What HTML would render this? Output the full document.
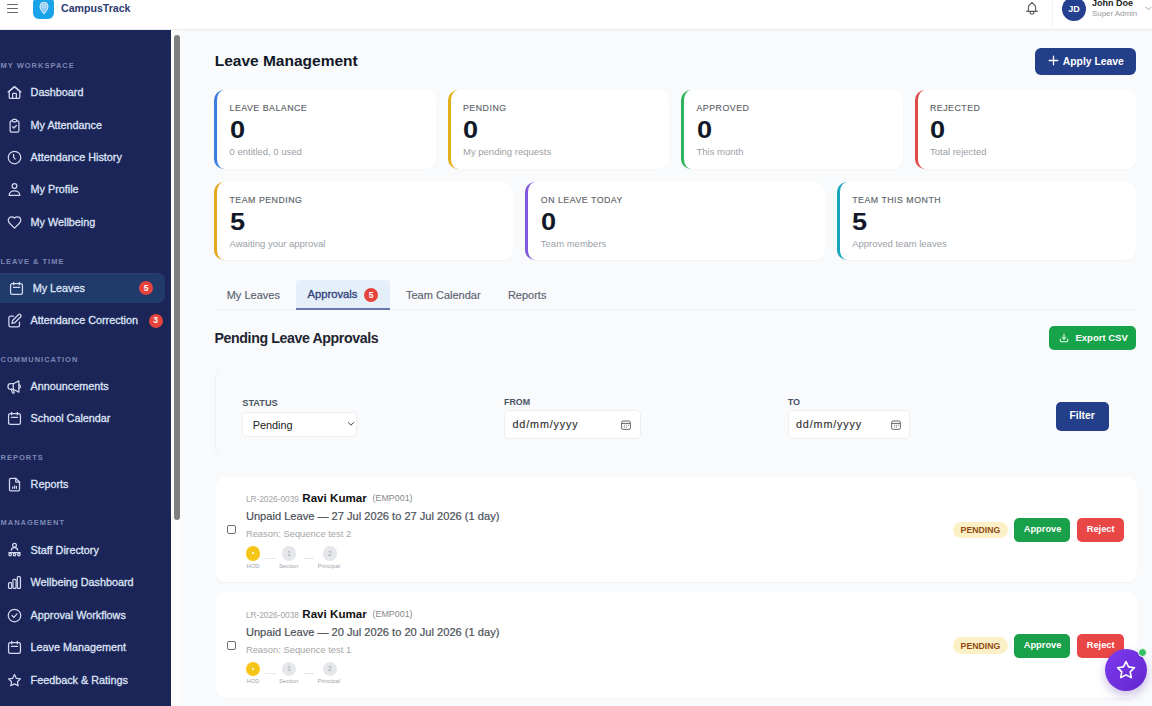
<!DOCTYPE html>
<html><head><meta charset="utf-8"><style>
html,body{margin:0;padding:0;}
body{width:1152px;height:706px;overflow:hidden;position:relative;background:#f8fafc;font-family:"Liberation Sans", sans-serif;}
.t{position:absolute;white-space:nowrap;}
.b{position:absolute;}
svg.b{overflow:visible;}
</style></head><body>
<div class="b" style="left:0px;top:0px;width:1152px;height:30px;background:#fff;border-bottom:1px solid #ececec;box-sizing:border-box;box-shadow:0 1px 2px rgba(0,0,0,0.03)"></div>
<div class="b" style="left:7px;top:4.2px;width:11px;height:1.2px;background:#666;border-radius:1px"></div>
<div class="b" style="left:7px;top:8.1px;width:11px;height:1.2px;background:#666;border-radius:1px"></div>
<div class="b" style="left:7px;top:11.9px;width:11px;height:1.2px;background:#666;border-radius:1px"></div>
<div class="b" style="left:33px;top:-3px;width:21px;height:21.5px;background:#1aa3e8;border-radius:6px"></div>
<svg class="b" style="left:39px;top:1.2px" width="10" height="14" viewBox="0 0 10 14"><path d="M5 13 C2.6 10.2 1 7.8 1 5.2 A4 4 0 0 1 9 5.2 C9 7.8 7.4 10.2 5 13Z" fill="#8fc9f0" stroke="#e6f5ff" stroke-width="0.9"/><rect x="3.6" y="3.4" width="2.8" height="3.6" fill="#a8d4f3" stroke="#c8e6fa" stroke-width="0.5"/></svg>
<div class="t" style="left:61.00px;top:3.13px;font-size:10.6px;line-height:10.6px;font-weight:700;color:#2b3a72;">CampusTrack</div>
<svg class="b" style="left:1025.6px;top:1px" width="12" height="14" viewBox="0 0 12 14" fill="none" stroke="#5a5a5a" stroke-width="1.1" stroke-linejoin="round" stroke-linecap="round"><path d="M2.4 10.3 V6.3 C2.4 4.9 3 4.4 3.8 3.8 L6 1.4 L8.2 3.8 C9 4.4 9.6 4.9 9.6 6.3 V10.3"/><path d="M0.7 10.4 H11.3"/><path d="M3.9 10.8 C4.3 14.1 7.7 14.1 8.1 10.8"/></svg>
<div class="b" style="left:1052px;top:0px;width:1px;height:30px;background:#f1f2f4"></div>
<div class="b" style="left:1062px;top:-3.5px;width:24px;height:24px;background:#24408e;border-radius:50%"></div>
<div class="t" style="left:1065.50px;top:4.68px;font-size:9px;line-height:9px;font-weight:700;color:#fff;width:17px;text-align:center">JD</div>
<div class="t" style="left:1092.00px;top:-0.62px;font-size:9px;line-height:9px;font-weight:700;color:#222;">John Doe</div>
<div class="t" style="left:1092.00px;top:9.61px;font-size:7.9px;line-height:7.9px;font-weight:400;color:#9a9a9a;">Super Admin</div>
<svg class="b" style="left:1145px;top:6px" width="7" height="5" viewBox="0 0 7 5" fill="none" stroke="#999" stroke-width="0.9"><path d="M0.5 0.8 L3.5 3.8 L6.5 0.8"/></svg>
<div class="b" style="left:0px;top:30px;width:171px;height:676px;background:#1b2558"></div>
<div class="b" style="left:171px;top:30px;width:11px;height:676px;background:#fcfcfc"></div>
<div class="b" style="left:174px;top:35px;width:6px;height:485px;background:#7f7f7f;border-radius:3px"></div>
<div class="t" style="left:0.50px;top:61.65px;font-size:7.5px;line-height:7.5px;font-weight:700;color:#7d87b3;letter-spacing:1px;">MY WORKSPACE</div>
<div class="t" style="left:0.50px;top:257.55px;font-size:7.5px;line-height:7.5px;font-weight:700;color:#7d87b3;letter-spacing:1px;">LEAVE &amp; TIME</div>
<div class="t" style="left:0.50px;top:355.85px;font-size:7.5px;line-height:7.5px;font-weight:700;color:#7d87b3;letter-spacing:1px;">COMMUNICATION</div>
<div class="t" style="left:0.50px;top:453.65px;font-size:7.5px;line-height:7.5px;font-weight:700;color:#7d87b3;letter-spacing:1px;">REPORTS</div>
<div class="t" style="left:0.50px;top:519.45px;font-size:7.5px;line-height:7.5px;font-weight:700;color:#7d87b3;letter-spacing:1px;">MANAGEMENT</div>
<div class="b" style="left:-8px;top:273px;width:173px;height:30px;background:#213a6c;border-radius:7px;box-shadow:inset 0 1px 0 rgba(255,255,255,0.04)"></div>
<svg class="b" style="left:6.5px;top:84.9px" width="15" height="15" viewBox="0 0 24 24" fill="none" stroke="#d3d9f0" stroke-width="2" stroke-linecap="round" stroke-linejoin="round"><path d="M15 21v-6.5a1 1 0 0 0-1-1h-4a1 1 0 0 0-1 1V21"/><path d="M3.5 11a2 2 0 0 1 .7-1.5l6.5-5.6a2 2 0 0 1 2.6 0l6.5 5.6a2 2 0 0 1 .7 1.5v8.5a2 2 0 0 1-2 2H5.5a2 2 0 0 1-2-2z"/><path d="M1.8 11.2 12 2.5l10.2 8.7"/></svg>
<div class="t" style="left:30.60px;top:87.26px;font-size:10.8px;line-height:10.8px;font-weight:400;color:#dfe4f6;-webkit-text-stroke:0.3px #dfe4f6">Dashboard</div>
<svg class="b" style="left:6.5px;top:117.5px" width="15" height="15" viewBox="0 0 24 24" fill="none" stroke="#d3d9f0" stroke-width="2" stroke-linecap="round" stroke-linejoin="round"><path d="M15.5 4.5h1.5a2 2 0 0 1 2 2v14a2 2 0 0 1-2 2H7a2 2 0 0 1-2-2v-14a2 2 0 0 1 2-2h1.5"/><rect x="8.5" y="2" width="7" height="4" rx="2"/><path d="m9 14 2 2 4-4"/></svg>
<div class="t" style="left:30.60px;top:119.86px;font-size:10.8px;line-height:10.8px;font-weight:400;color:#dfe4f6;-webkit-text-stroke:0.3px #dfe4f6">My Attendance</div>
<svg class="b" style="left:6.5px;top:150.0px" width="15" height="15" viewBox="0 0 24 24" fill="none" stroke="#d3d9f0" stroke-width="2" stroke-linecap="round" stroke-linejoin="round"><circle cx="12" cy="12" r="10"/><path d="M10.5 7v4.5l2.5 3"/></svg>
<div class="t" style="left:30.60px;top:152.36px;font-size:10.8px;line-height:10.8px;font-weight:400;color:#dfe4f6;-webkit-text-stroke:0.3px #dfe4f6">Attendance History</div>
<svg class="b" style="left:6.5px;top:182.0px" width="15" height="15" viewBox="0 0 24 24" fill="none" stroke="#d3d9f0" stroke-width="2" stroke-linecap="round" stroke-linejoin="round"><circle cx="12" cy="6.5" r="3.8"/><path d="M3.5 21.5c0-4.5 3.8-7.5 8.5-7.5s8.5 3 8.5 7.5z"/></svg>
<div class="t" style="left:30.60px;top:184.36px;font-size:10.8px;line-height:10.8px;font-weight:400;color:#dfe4f6;-webkit-text-stroke:0.3px #dfe4f6">My Profile</div>
<svg class="b" style="left:6.5px;top:215.1px" width="15" height="15" viewBox="0 0 24 24" fill="none" stroke="#d3d9f0" stroke-width="2" stroke-linecap="round" stroke-linejoin="round"><path d="M19.5 13.5c1.5-1.5 2.5-3 2.5-5A5.5 5.5 0 0 0 16.5 3c-1.8 0-3 .5-4.5 2-1.5-1.5-2.7-2-4.5-2A5.5 5.5 0 0 0 2 8.5c0 2 1 3.5 2.5 5l7.5 7.5Z"/></svg>
<div class="t" style="left:30.60px;top:217.46px;font-size:10.8px;line-height:10.8px;font-weight:400;color:#dfe4f6;-webkit-text-stroke:0.3px #dfe4f6">My Wellbeing</div>
<svg class="b" style="left:8.5px;top:280.9px" width="15" height="15" viewBox="0 0 24 24" fill="none" stroke="#d3d9f0" stroke-width="2" stroke-linecap="round" stroke-linejoin="round"><rect x="2.5" y="4" width="19" height="17.5" rx="3"/><path d="M7.5 2v4M16.5 2v4M7 10h10"/></svg>
<div class="t" style="left:32.70px;top:283.26px;font-size:10.8px;line-height:10.8px;font-weight:400;color:#dfe4f6;-webkit-text-stroke:0.3px #dfe4f6">My Leaves</div>
<svg class="b" style="left:6.5px;top:312.8px" width="15" height="15" viewBox="0 0 24 24" fill="none" stroke="#d3d9f0" stroke-width="2" stroke-linecap="round" stroke-linejoin="round"><path d="M10.5 5H6a3 3 0 0 0-3 3v11a3 3 0 0 0 3 3h11a3 3 0 0 0 3-3v-4.5"/><path d="M18.5 2.5a2.5 2.5 0 0 1 3.5 3.5l-9.5 9.5-4.5 1 1-4.5z"/></svg>
<div class="t" style="left:30.60px;top:315.16px;font-size:10.8px;line-height:10.8px;font-weight:400;color:#dfe4f6;-webkit-text-stroke:0.3px #dfe4f6">Attendance Correction</div>
<svg class="b" style="left:6.5px;top:378.9px" width="15" height="15" viewBox="0 0 24 24" fill="none" stroke="#d3d9f0" stroke-width="2" stroke-linecap="round" stroke-linejoin="round"><path d="M10 7.5 19 3v18l-9-4.5"/><path d="M10 7.5H6a4 4 0 0 0 0 9h4z"/><path d="M19 9.5a2.5 2.5 0 0 1 0 5"/><path d="M7 16.5l1.5 5a1.5 1.5 0 0 0 3-.5L10 16.5"/></svg>
<div class="t" style="left:30.60px;top:381.26px;font-size:10.8px;line-height:10.8px;font-weight:400;color:#dfe4f6;-webkit-text-stroke:0.3px #dfe4f6">Announcements</div>
<svg class="b" style="left:6.5px;top:410.8px" width="15" height="15" viewBox="0 0 24 24" fill="none" stroke="#d3d9f0" stroke-width="2" stroke-linecap="round" stroke-linejoin="round"><rect x="2.5" y="4" width="19" height="17.5" rx="3"/><path d="M7.5 2v4M16.5 2v4M7 10h10"/></svg>
<div class="t" style="left:30.60px;top:413.16px;font-size:10.8px;line-height:10.8px;font-weight:400;color:#dfe4f6;-webkit-text-stroke:0.3px #dfe4f6">School Calendar</div>
<svg class="b" style="left:6.5px;top:476.5px" width="15" height="15" viewBox="0 0 24 24" fill="none" stroke="#d3d9f0" stroke-width="2" stroke-linecap="round" stroke-linejoin="round"><path d="M14 2H6a2 2 0 0 0-2 2v16a2 2 0 0 0 2 2h12a2 2 0 0 0 2-2V8z"/><path d="M14 2v6h6"/><path d="M9 18v-2M12 18v-4M15 18v-3"/></svg>
<div class="t" style="left:30.60px;top:478.86px;font-size:10.8px;line-height:10.8px;font-weight:400;color:#dfe4f6;-webkit-text-stroke:0.3px #dfe4f6">Reports</div>
<svg class="b" style="left:6.5px;top:542.3px" width="15" height="15" viewBox="0 0 24 24" fill="none" stroke="#d3d9f0" stroke-width="2" stroke-linecap="round" stroke-linejoin="round"><circle cx="12" cy="5" r="3"/><path d="M7 13c0-2.5 2.2-4 5-4s5 1.5 5 4"/><path d="M3 17h18"/><circle cx="5" cy="20" r="2"/><circle cx="12" cy="20" r="2"/><circle cx="19" cy="20" r="2"/></svg>
<div class="t" style="left:30.60px;top:544.66px;font-size:10.8px;line-height:10.8px;font-weight:400;color:#dfe4f6;-webkit-text-stroke:0.3px #dfe4f6">Staff Directory</div>
<svg class="b" style="left:6.5px;top:575.0px" width="15" height="15" viewBox="0 0 24 24" fill="none" stroke="#d3d9f0" stroke-width="2" stroke-linecap="round" stroke-linejoin="round"><rect x="2.5" y="12" width="5" height="9.5" rx="1.5"/><rect x="9.5" y="7" width="5" height="14.5" rx="1.5"/><rect x="16.5" y="2.5" width="5" height="19" rx="1.5"/></svg>
<div class="t" style="left:30.60px;top:577.36px;font-size:10.8px;line-height:10.8px;font-weight:400;color:#dfe4f6;-webkit-text-stroke:0.3px #dfe4f6">Wellbeing Dashboard</div>
<svg class="b" style="left:6.5px;top:607.5px" width="15" height="15" viewBox="0 0 24 24" fill="none" stroke="#d3d9f0" stroke-width="2" stroke-linecap="round" stroke-linejoin="round"><circle cx="12" cy="12" r="10"/><path d="m8 12 3 3 5-5.5"/></svg>
<div class="t" style="left:30.60px;top:609.86px;font-size:10.8px;line-height:10.8px;font-weight:400;color:#dfe4f6;-webkit-text-stroke:0.3px #dfe4f6">Approval Workflows</div>
<svg class="b" style="left:6.5px;top:640.0px" width="15" height="15" viewBox="0 0 24 24" fill="none" stroke="#d3d9f0" stroke-width="2" stroke-linecap="round" stroke-linejoin="round"><rect x="2.5" y="4" width="19" height="17.5" rx="3"/><path d="M7.5 2v4M16.5 2v4M7 10h10"/></svg>
<div class="t" style="left:30.60px;top:642.36px;font-size:10.8px;line-height:10.8px;font-weight:400;color:#dfe4f6;-webkit-text-stroke:0.3px #dfe4f6">Leave Management</div>
<svg class="b" style="left:6.5px;top:672.5px" width="15" height="15" viewBox="0 0 24 24" fill="none" stroke="#d3d9f0" stroke-width="2" stroke-linecap="round" stroke-linejoin="round"><path d="M12 2.5l2.9 6 6.6.9-4.8 4.6 1.2 6.5L12 17.4l-5.9 3.1 1.2-6.5L2.5 9.4l6.6-.9z"/></svg>
<div class="t" style="left:30.60px;top:674.86px;font-size:10.8px;line-height:10.8px;font-weight:400;color:#dfe4f6;-webkit-text-stroke:0.3px #dfe4f6">Feedback &amp; Ratings</div>
<div class="b" style="left:139.0px;top:281.0px;width:14px;height:14px;background:#e5443c;border-radius:50%"></div>
<div class="t" style="left:139.00px;top:283.80px;font-size:8.5px;line-height:8.5px;font-weight:700;color:#fff;width:14px;text-align:center">5</div>
<div class="b" style="left:148.6px;top:313.5px;width:14px;height:14px;background:#e5443c;border-radius:50%"></div>
<div class="t" style="left:148.60px;top:316.30px;font-size:8.5px;line-height:8.5px;font-weight:700;color:#fff;width:14px;text-align:center">3</div>
<div class="t" style="left:214.70px;top:53.28px;font-size:15.5px;line-height:15.5px;font-weight:700;color:#111827;">Leave Management</div>
<div class="b" style="left:1035px;top:48px;width:101px;height:27px;background:#233f8a;border-radius:6px"></div>
<svg class="b" style="left:1048px;top:55px" width="11" height="11" viewBox="0 0 11 11" fill="none" stroke="#fff" stroke-width="1.3" stroke-linecap="round"><path d="M5.5 1.2v8.6M1.2 5.5h8.6"/></svg>
<div class="t" style="left:1062.80px;top:56.54px;font-size:10.35px;line-height:10.35px;font-weight:700;color:#fff;">Apply Leave</div>
<div class="b" style="left:214px;top:90px;width:221.5px;height:79px;background:#fff;border-radius:10px;border-left:3px solid #3b7fdb;box-sizing:border-box;box-shadow:0 1px 2px rgba(15,23,42,0.03)"></div>
<div class="t" style="left:229.50px;top:103.75px;font-size:8.8px;line-height:8.8px;font-weight:400;color:#606469;letter-spacing:0.5px;-webkit-text-stroke:0.15px #606469">LEAVE BALANCE</div>
<div class="t" style="left:229.50px;top:118.53px;font-size:23px;line-height:23px;font-weight:700;color:#111827;transform:scaleX(1.18);transform-origin:0 0">0</div>
<div class="t" style="left:229.50px;top:146.76px;font-size:9.5px;line-height:9.5px;font-weight:400;color:#9aa0a6;">0 entitled, 0 used</div>
<div class="b" style="left:447.5px;top:90px;width:221.5px;height:79px;background:#fff;border-radius:10px;border-left:3px solid #e3b01c;box-sizing:border-box;box-shadow:0 1px 2px rgba(15,23,42,0.03)"></div>
<div class="t" style="left:463.00px;top:103.75px;font-size:8.8px;line-height:8.8px;font-weight:400;color:#606469;letter-spacing:0.5px;-webkit-text-stroke:0.15px #606469">PENDING</div>
<div class="t" style="left:463.00px;top:118.53px;font-size:23px;line-height:23px;font-weight:700;color:#111827;transform:scaleX(1.18);transform-origin:0 0">0</div>
<div class="t" style="left:463.00px;top:146.76px;font-size:9.5px;line-height:9.5px;font-weight:400;color:#9aa0a6;">My pending requests</div>
<div class="b" style="left:681.0px;top:90px;width:221.5px;height:79px;background:#fff;border-radius:10px;border-left:3px solid #2fb35a;box-sizing:border-box;box-shadow:0 1px 2px rgba(15,23,42,0.03)"></div>
<div class="t" style="left:696.50px;top:103.75px;font-size:8.8px;line-height:8.8px;font-weight:400;color:#606469;letter-spacing:0.5px;-webkit-text-stroke:0.15px #606469">APPROVED</div>
<div class="t" style="left:696.50px;top:118.53px;font-size:23px;line-height:23px;font-weight:700;color:#111827;transform:scaleX(1.18);transform-origin:0 0">0</div>
<div class="t" style="left:696.50px;top:146.76px;font-size:9.5px;line-height:9.5px;font-weight:400;color:#9aa0a6;">This month</div>
<div class="b" style="left:914.5px;top:90px;width:221.5px;height:79px;background:#fff;border-radius:10px;border-left:3px solid #e04a4a;box-sizing:border-box;box-shadow:0 1px 2px rgba(15,23,42,0.03)"></div>
<div class="t" style="left:930.00px;top:103.75px;font-size:8.8px;line-height:8.8px;font-weight:400;color:#606469;letter-spacing:0.5px;-webkit-text-stroke:0.15px #606469">REJECTED</div>
<div class="t" style="left:930.00px;top:118.53px;font-size:23px;line-height:23px;font-weight:700;color:#111827;transform:scaleX(1.18);transform-origin:0 0">0</div>
<div class="t" style="left:930.00px;top:146.76px;font-size:9.5px;line-height:9.5px;font-weight:400;color:#9aa0a6;">Total rejected</div>
<div class="b" style="left:214px;top:182.4px;width:299.3333333333333px;height:78px;background:#fff;border-radius:10px;border-left:3px solid #e3a81c;box-sizing:border-box;box-shadow:0 1px 2px rgba(15,23,42,0.03)"></div>
<div class="t" style="left:229.50px;top:196.15px;font-size:8.8px;line-height:8.8px;font-weight:400;color:#606469;letter-spacing:0.5px;-webkit-text-stroke:0.15px #606469">TEAM PENDING</div>
<div class="t" style="left:229.50px;top:210.93px;font-size:23px;line-height:23px;font-weight:700;color:#111827;transform:scaleX(1.18);transform-origin:0 0">5</div>
<div class="t" style="left:229.50px;top:239.16px;font-size:9.5px;line-height:9.5px;font-weight:400;color:#9aa0a6;">Awaiting your approval</div>
<div class="b" style="left:525.3333333333333px;top:182.4px;width:299.3333333333333px;height:78px;background:#fff;border-radius:10px;border-left:3px solid #8058db;box-sizing:border-box;box-shadow:0 1px 2px rgba(15,23,42,0.03)"></div>
<div class="t" style="left:540.83px;top:196.15px;font-size:8.8px;line-height:8.8px;font-weight:400;color:#606469;letter-spacing:0.5px;-webkit-text-stroke:0.15px #606469">ON LEAVE TODAY</div>
<div class="t" style="left:540.83px;top:210.93px;font-size:23px;line-height:23px;font-weight:700;color:#111827;transform:scaleX(1.18);transform-origin:0 0">0</div>
<div class="t" style="left:540.83px;top:239.16px;font-size:9.5px;line-height:9.5px;font-weight:400;color:#9aa0a6;">Team members</div>
<div class="b" style="left:836.6666666666666px;top:182.4px;width:299.3333333333333px;height:78px;background:#fff;border-radius:10px;border-left:3px solid #1aa7bd;box-sizing:border-box;box-shadow:0 1px 2px rgba(15,23,42,0.03)"></div>
<div class="t" style="left:852.17px;top:196.15px;font-size:8.8px;line-height:8.8px;font-weight:400;color:#606469;letter-spacing:0.5px;-webkit-text-stroke:0.15px #606469">TEAM THIS MONTH</div>
<div class="t" style="left:852.17px;top:210.93px;font-size:23px;line-height:23px;font-weight:700;color:#111827;transform:scaleX(1.18);transform-origin:0 0">5</div>
<div class="t" style="left:852.17px;top:239.16px;font-size:9.5px;line-height:9.5px;font-weight:400;color:#9aa0a6;">Approved team leaves</div>
<div class="b" style="left:214px;top:309px;width:923px;height:1px;background:#f0f2f5"></div>
<div class="b" style="left:295.6px;top:280.3px;width:94.3px;height:30.2px;background:#e4effa;border-radius:4px 4px 0 0;border-bottom:2px solid #6a78b0;box-sizing:border-box"></div>
<div class="t" style="left:226.70px;top:290.49px;font-size:11px;line-height:11px;font-weight:400;color:#5b6270;-webkit-text-stroke:0.15px #5b6270">My Leaves</div>
<div class="t" style="left:307.60px;top:289.32px;font-size:11.2px;line-height:11.2px;font-weight:400;color:#34457e;-webkit-text-stroke:0.35px #34457e">Approvals</div>
<div class="b" style="left:364.0px;top:288.0px;width:14px;height:14px;background:#e5443c;border-radius:50%"></div>
<div class="t" style="left:364.00px;top:290.80px;font-size:8.5px;line-height:8.5px;font-weight:700;color:#fff;width:14px;text-align:center">5</div>
<div class="t" style="left:406.00px;top:290.49px;font-size:11px;line-height:11px;font-weight:400;color:#5b6270;-webkit-text-stroke:0.15px #5b6270">Team Calendar</div>
<div class="t" style="left:507.90px;top:290.49px;font-size:11px;line-height:11px;font-weight:400;color:#5b6270;-webkit-text-stroke:0.15px #5b6270">Reports</div>
<div class="t" style="left:214.50px;top:330.58px;font-size:14.2px;line-height:14.2px;font-weight:700;color:#1f2530;letter-spacing:-0.4px;">Pending Leave Approvals</div>
<div class="b" style="left:1049px;top:326px;width:87px;height:24px;background:#17a34a;border-radius:5px"></div>
<svg class="b" style="left:1059px;top:333px" width="10" height="10" viewBox="0 0 24 24" fill="none" stroke="#fff" stroke-width="2.4" stroke-linecap="round" stroke-linejoin="round"><path d="M21 15v4a2 2 0 0 1-2 2H5a2 2 0 0 1-2-2v-4"/><path d="m7 10 5 5 5-5"/><path d="M12 15V3"/></svg>
<div class="t" style="left:1075.50px;top:333.46px;font-size:9.5px;line-height:9.5px;font-weight:700;color:#fff;">Export CSV</div>
<div class="b" style="left:214.5px;top:367px;width:921.5px;height:91px;background:#f9fafc;border-radius:10px;border-left:1px solid #eef0f4;box-sizing:border-box"></div>
<div class="t" style="left:242.30px;top:399.21px;font-size:9.2px;line-height:9.2px;font-weight:700;color:#4b5563;">STATUS</div>
<div class="b" style="left:242.3px;top:412.3px;width:115px;height:25px;background:#fff;border:1px solid #eceef2;border-radius:4px;box-sizing:border-box"></div>
<div class="t" style="left:252.70px;top:419.57px;font-size:10.9px;line-height:10.9px;font-weight:400;color:#222;">Pending</div>
<svg class="b" style="left:347px;top:421px" width="8" height="6" viewBox="0 0 8 6" fill="none" stroke="#444" stroke-width="1"><path d="M1 1.2 L4 4.2 L7 1.2"/></svg>
<div class="t" style="left:504.00px;top:397.97px;font-size:8.9px;line-height:8.9px;font-weight:700;color:#4b5563;">FROM</div>
<div class="b" style="left:504px;top:410px;width:136.5px;height:29px;background:#fff;border:1px solid #eceef2;border-radius:5px;box-sizing:border-box"></div>
<div class="t" style="left:512.50px;top:419.36px;font-size:10.8px;line-height:10.8px;font-weight:400;color:#2c2c2c;letter-spacing:0.85px;-webkit-text-stroke:0.12px #2c2c2c">dd/mm/yyyy</div>
<svg class="b" style="left:621.0px;top:419.5px" width="10" height="10" viewBox="0 0 10 10" fill="none" stroke="#555" stroke-width="0.9"><rect x="0.6" y="1" width="8.8" height="8.4" rx="1.6"/><path d="M0.6 3.4h8.8"/><path d="M3 5.3h.8M5 5.3h.8M7 5.3h.8M3 7.2h.8M5 7.2h.8" stroke-width="0.9"/></svg>
<div class="t" style="left:787.70px;top:397.80px;font-size:9.1px;line-height:9.1px;font-weight:700;color:#4b5563;">TO</div>
<div class="b" style="left:787.5px;top:410px;width:122.7px;height:29px;background:#fff;border:1px solid #eceef2;border-radius:5px;box-sizing:border-box"></div>
<div class="t" style="left:796.00px;top:419.36px;font-size:10.8px;line-height:10.8px;font-weight:400;color:#2c2c2c;letter-spacing:0.85px;-webkit-text-stroke:0.12px #2c2c2c">dd/mm/yyyy</div>
<svg class="b" style="left:890.7px;top:419.5px" width="10" height="10" viewBox="0 0 10 10" fill="none" stroke="#555" stroke-width="0.9"><rect x="0.6" y="1" width="8.8" height="8.4" rx="1.6"/><path d="M0.6 3.4h8.8"/><path d="M3 5.3h.8M5 5.3h.8M7 5.3h.8M3 7.2h.8M5 7.2h.8" stroke-width="0.9"/></svg>
<div class="b" style="left:1056px;top:401.5px;width:53px;height:29px;background:#233f8a;border-radius:5px"></div>
<div class="t" style="left:1069.50px;top:410.78px;font-size:10.3px;line-height:10.3px;font-weight:700;color:#fff;">Filter</div>
<div class="b" style="left:215.5px;top:476.5px;width:921px;height:105.5px;background:#fff;border-radius:9px;box-shadow:0 1px 2px rgba(15,23,42,0.04)"></div>
<div class="t" style="left:245.90px;top:494.97px;font-size:8.3px;line-height:8.3px;font-weight:400;color:#a3a3a3;">LR-2026-0039</div>
<div class="t" style="left:302.30px;top:492.18px;font-size:11.6px;line-height:11.6px;font-weight:700;color:#111;">Ravi Kumar</div>
<div class="t" style="left:372.60px;top:494.47px;font-size:8.9px;line-height:8.9px;font-weight:400;color:#888;">(EMP001)</div>
<div class="t" style="left:245.90px;top:511.40px;font-size:11.1px;line-height:11.1px;font-weight:400;color:#4b5058;-webkit-text-stroke:0.2px #4b5058">Unpaid Leave — 27 Jul 2026 to 27 Jul 2026 (1 day)</div>
<div class="t" style="left:245.90px;top:529.04px;font-size:9.4px;line-height:9.4px;font-weight:400;color:#a6a6a6;">Reason: Sequence test 2</div>
<div class="b" style="left:226.8px;top:525.0px;width:9px;height:9px;border:1px solid #6f6f6f;border-radius:2px;box-sizing:border-box;background:#fff"></div>
<div class="b" style="left:245.9px;top:546.0px;width:14.6px;height:14.6px;background:#f5c518;border-radius:50%"></div>
<div class="b" style="left:252.3px;top:552.4px;width:1.8px;height:1.8px;background:#fff;border-radius:50%"></div>
<div class="b" style="left:264.5px;top:557.5px;width:11.5px;height:1px;background:#e5e7eb"></div>
<div class="b" style="left:281.8px;top:546.0px;width:14.6px;height:14.6px;background:#e6e7ea;border-radius:50%"></div>
<div class="t" style="left:281.80px;top:550.50px;font-size:6.5px;line-height:6.5px;font-weight:400;color:#9ca3af;width:14.6px;text-align:center">1</div>
<div class="b" style="left:304.4px;top:557.5px;width:10px;height:1px;background:#e5e7eb"></div>
<div class="b" style="left:322.6px;top:546.0px;width:14.6px;height:14.6px;background:#e6e7ea;border-radius:50%"></div>
<div class="t" style="left:322.60px;top:550.50px;font-size:6.5px;line-height:6.5px;font-weight:400;color:#9ca3af;width:14.6px;text-align:center">2</div>
<div class="t" style="left:246.60px;top:563.59px;font-size:5.8px;line-height:5.8px;font-weight:400;color:#a0a4ab;">HOD</div>
<div class="t" style="left:278.90px;top:563.59px;font-size:5.8px;line-height:5.8px;font-weight:400;color:#a0a4ab;">Section</div>
<div class="t" style="left:317.80px;top:563.59px;font-size:5.8px;line-height:5.8px;font-weight:400;color:#a0a4ab;">Principal</div>
<div class="b" style="left:952.8px;top:521.5px;width:55px;height:16.5px;background:#fcf1c6;border-radius:9px"></div>
<div class="t" style="left:960.60px;top:525.74px;font-size:8.7px;line-height:8.7px;font-weight:700;color:#8f4a12;">PENDING</div>
<div class="b" style="left:1013.6px;top:517.7px;width:56.7px;height:24.1px;background:#18a04a;border-radius:5px"></div>
<div class="t" style="left:1023.70px;top:525.43px;font-size:9.3px;line-height:9.3px;font-weight:700;color:#fff;">Approve</div>
<div class="b" style="left:1077px;top:517.7px;width:46.8px;height:24.1px;background:#e94646;border-radius:5px"></div>
<div class="t" style="left:1086.70px;top:525.43px;font-size:9.3px;line-height:9.3px;font-weight:700;color:#fff;">Reject</div>
<div class="b" style="left:215.5px;top:592.4px;width:921px;height:105.5px;background:#fff;border-radius:9px;box-shadow:0 1px 2px rgba(15,23,42,0.04)"></div>
<div class="t" style="left:245.90px;top:610.87px;font-size:8.3px;line-height:8.3px;font-weight:400;color:#a3a3a3;">LR-2026-0038</div>
<div class="t" style="left:302.30px;top:608.08px;font-size:11.6px;line-height:11.6px;font-weight:700;color:#111;">Ravi Kumar</div>
<div class="t" style="left:372.60px;top:610.37px;font-size:8.9px;line-height:8.9px;font-weight:400;color:#888;">(EMP001)</div>
<div class="t" style="left:245.90px;top:627.30px;font-size:11.1px;line-height:11.1px;font-weight:400;color:#4b5058;-webkit-text-stroke:0.2px #4b5058">Unpaid Leave — 20 Jul 2026 to 20 Jul 2026 (1 day)</div>
<div class="t" style="left:245.90px;top:644.94px;font-size:9.4px;line-height:9.4px;font-weight:400;color:#a6a6a6;">Reason: Sequence test 1</div>
<div class="b" style="left:226.8px;top:640.9px;width:9px;height:9px;border:1px solid #6f6f6f;border-radius:2px;box-sizing:border-box;background:#fff"></div>
<div class="b" style="left:245.9px;top:661.9px;width:14.6px;height:14.6px;background:#f5c518;border-radius:50%"></div>
<div class="b" style="left:252.3px;top:668.3px;width:1.8px;height:1.8px;background:#fff;border-radius:50%"></div>
<div class="b" style="left:264.5px;top:673.4px;width:11.5px;height:1px;background:#e5e7eb"></div>
<div class="b" style="left:281.8px;top:661.9px;width:14.6px;height:14.6px;background:#e6e7ea;border-radius:50%"></div>
<div class="t" style="left:281.80px;top:666.40px;font-size:6.5px;line-height:6.5px;font-weight:400;color:#9ca3af;width:14.6px;text-align:center">1</div>
<div class="b" style="left:304.4px;top:673.4px;width:10px;height:1px;background:#e5e7eb"></div>
<div class="b" style="left:322.6px;top:661.9px;width:14.6px;height:14.6px;background:#e6e7ea;border-radius:50%"></div>
<div class="t" style="left:322.60px;top:666.40px;font-size:6.5px;line-height:6.5px;font-weight:400;color:#9ca3af;width:14.6px;text-align:center">2</div>
<div class="t" style="left:246.60px;top:679.49px;font-size:5.8px;line-height:5.8px;font-weight:400;color:#a0a4ab;">HOD</div>
<div class="t" style="left:278.90px;top:679.49px;font-size:5.8px;line-height:5.8px;font-weight:400;color:#a0a4ab;">Section</div>
<div class="t" style="left:317.80px;top:679.49px;font-size:5.8px;line-height:5.8px;font-weight:400;color:#a0a4ab;">Principal</div>
<div class="b" style="left:952.8px;top:637.4px;width:55px;height:16.5px;background:#fcf1c6;border-radius:9px"></div>
<div class="t" style="left:960.60px;top:641.64px;font-size:8.7px;line-height:8.7px;font-weight:700;color:#8f4a12;">PENDING</div>
<div class="b" style="left:1013.6px;top:633.6px;width:56.7px;height:24.1px;background:#18a04a;border-radius:5px"></div>
<div class="t" style="left:1023.70px;top:641.33px;font-size:9.3px;line-height:9.3px;font-weight:700;color:#fff;">Approve</div>
<div class="b" style="left:1077px;top:633.6px;width:46.8px;height:24.1px;background:#e94646;border-radius:5px"></div>
<div class="t" style="left:1086.70px;top:641.33px;font-size:9.3px;line-height:9.3px;font-weight:700;color:#fff;">Reject</div>
<div class="b" style="left:1105px;top:649px;width:42px;height:42px;background:linear-gradient(135deg,#7c3aed,#6426d0);border-radius:50%;box-shadow:0 4px 10px rgba(80,40,160,0.3)"></div>
<svg class="b" style="left:1115px;top:659px" width="22" height="22" viewBox="0 0 24 24" fill="none" stroke="#fff" stroke-width="1.8" stroke-linejoin="round"><path d="M12 2.8l2.8 5.8 6.4.9-4.6 4.5 1.1 6.3L12 17.3l-5.7 3 1.1-6.3-4.6-4.5 6.4-.9z"/></svg>
<div class="b" style="left:1138.3px;top:648px;width:9px;height:9px;background:#34c060;border-radius:50%;border:1px solid #fff;box-sizing:border-box"></div>
</body></html>
